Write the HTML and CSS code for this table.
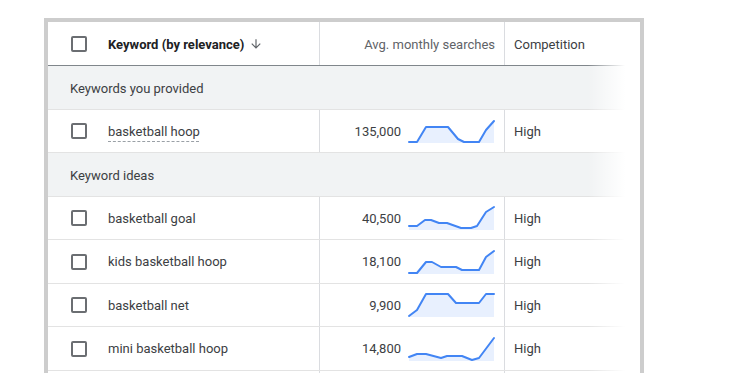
FILE: index.html
```html
<!DOCTYPE html>
<html lang="en">
<head>
  <meta charset="UTF-8" />
  <title>Keyword ideas</title>
  <link rel="stylesheet" href="styles.css">
</head>
<body>
  <div class="frame">
    <div class="table">
      <div class="row head">
        <div class="cell kw">
          <span class="check"></span>
          <span class="title">Keyword (by relevance)</span>
          <svg class="sort" viewBox="0 0 24 24" width="14" height="14"><path d="M20 12l-1.41-1.41L13 16.17V4h-2v12.17l-5.58-5.59L4 12l8 8 8-8z"/></svg>
        </div>
        <div class="cell num">Avg. monthly searches</div>
        <div class="cell comp">Competition</div>
      </div>

      <div class="group">Keywords you provided</div>

      <div class="row">
        <div class="cell kw"><span class="check"></span><span class="dashed">basketball hoop</span></div>
        <div class="cell num">135,000
          <svg class="spark" viewBox="0 0 86 24" width="86" height="24"><path class="area" d="M0 23 L8 23 L17 8 L39 8 L49 20 L55 23 L70 23 L77 11 L85 2 L85 24 L0 24Z"/><polyline points="0,23 8,23 17,8 39,8 49,20 55,23 70,23 77,11 85,2"/></svg>
        </div>
        <div class="cell comp">High</div>
      </div>

      <div class="group">Keyword ideas</div>

      <div class="row">
        <div class="cell kw"><span class="check"></span>basketball goal</div>
        <div class="cell num">40,500
          <svg class="spark" viewBox="0 0 86 24" width="86" height="24"><path class="area" d="M0 20 L8 20 L16 14 L22 14 L30 17 L38 17 L52 22 L62 22 L68 20 L77 6 L85 1 L85 24 L0 24Z"/><polyline points="0,20 8,20 16,14 22,14 30,17 38,17 52,22 62,22 68,20 77,6 85,1"/></svg>
        </div>
        <div class="cell comp">High</div>
      </div>

      <div class="row">
        <div class="cell kw"><span class="check"></span>kids basketball hoop</div>
        <div class="cell num">18,100
          <svg class="spark" viewBox="0 0 86 24" width="86" height="24"><path class="area" d="M0 23 L8 23 L17 12 L23 12 L32 17 L47 17 L53 20 L70 20 L77 7 L85 1 L85 24 L0 24Z"/><polyline points="0,23 8,23 17,12 23,12 32,17 47,17 53,20 70,20 77,7 85,1"/></svg>
        </div>
        <div class="cell comp">High</div>
      </div>

      <div class="row">
        <div class="cell kw"><span class="check"></span>basketball net</div>
        <div class="cell num">9,900
          <svg class="spark" viewBox="0 0 86 24" width="86" height="24"><path class="area" d="M0 23 L8 17 L17 1 L39 1 L47 10 L70 10 L77 1 L85 1 L85 24 L0 24Z"/><polyline points="0,23 8,17 17,1 39,1 47,10 70,10 77,1 85,1"/></svg>
        </div>
        <div class="cell comp">High</div>
      </div>

      <div class="row">
        <div class="cell kw"><span class="check"></span>mini basketball hoop</div>
        <div class="cell num">14,800
          <svg class="spark" viewBox="0 0 86 24" width="86" height="24"><path class="area" d="M0 20 L8 17 L17 17 L32 21 L38 19 L53 19 L63 23 L70 21 L85 1 L85 24 L0 24Z"/><polyline points="0,20 8,17 17,17 32,21 38,19 53,19 63,23 70,21 85,1"/></svg>
        </div>
        <div class="cell comp">High</div>
      </div>

      <div class="row">
        <div class="cell kw"></div>
        <div class="cell num"></div>
        <div class="cell comp"></div>
      </div>
    </div>
    <div class="fade"></div>
  </div>
</body>
</html>
```

FILE: styles.css
```css
html, body {
  margin: 0;
  height: 100%;
  overflow: hidden;
  background: #fff;
}
body {
  font-family: Roboto, "Liberation Sans", Arial, sans-serif;
  font-size: 13px;
  color: #3c4043;
  padding: 18px 0 0 44px;
  box-sizing: border-box;
}
.frame {
  position: relative;
  width: 592px;
  height: 420px;
  border: 4px solid #cdcdcd;
  border-bottom: none;
  background: #fff;
  overflow: hidden;
}
.row {
  display: grid;
  grid-template-columns: 272px 185px 1fr;
  height: 43.5px;
  box-sizing: border-box;
  border-bottom: 1px solid #e3e3e3;
}
.row.head {
  height: 44px;
  border-bottom: 1px solid #80868b;
}
.cell {
  display: flex;
  align-items: center;
  padding-top: 1px;
}
.cell.kw {
  padding-left: 23px;
  border-right: 1px solid #dadce0;
}
.cell.num {
  justify-content: flex-end;
  padding-right: 9px;
  border-right: 1px solid #dadce0;
}
.cell.comp {
  padding-left: 9px;
}
.head .num {
  color: #5f6368;
}
.title {
  font-weight: 700;
  color: #202124;
}
.sort {
  fill: #5f6368;
  margin-left: 5px;
}
.check {
  width: 12px;
  height: 12px;
  border: 2px solid #6b6e72;
  border-radius: 2px;
  margin-right: 21px;
  flex-shrink: 0;
}
.dashed {
  text-decoration: underline dashed #9aa0a6;
  text-decoration-thickness: 1px;
  text-underline-offset: 5px;
}
.group {
  height: 43.5px;
  box-sizing: border-box;
  display: flex;
  align-items: center;
  padding: 2px 0 0 22px;
  background: #f1f3f4;
  border-bottom: 1px solid #e3e3e3;
}
.spark {
  margin-left: 8px;
  overflow: visible;
}
.spark .area {
  fill: #e8f0fe;
}
.spark polyline {
  fill: none;
  stroke: #4285f4;
  stroke-width: 2;
  stroke-linejoin: round;
  stroke-linecap: round;
}
.fade {
  position: absolute;
  top: 0;
  right: 0;
  bottom: 0;
  width: 52px;
  background: linear-gradient(to right, rgba(255,255,255,0), #fff 37px);
}
```
